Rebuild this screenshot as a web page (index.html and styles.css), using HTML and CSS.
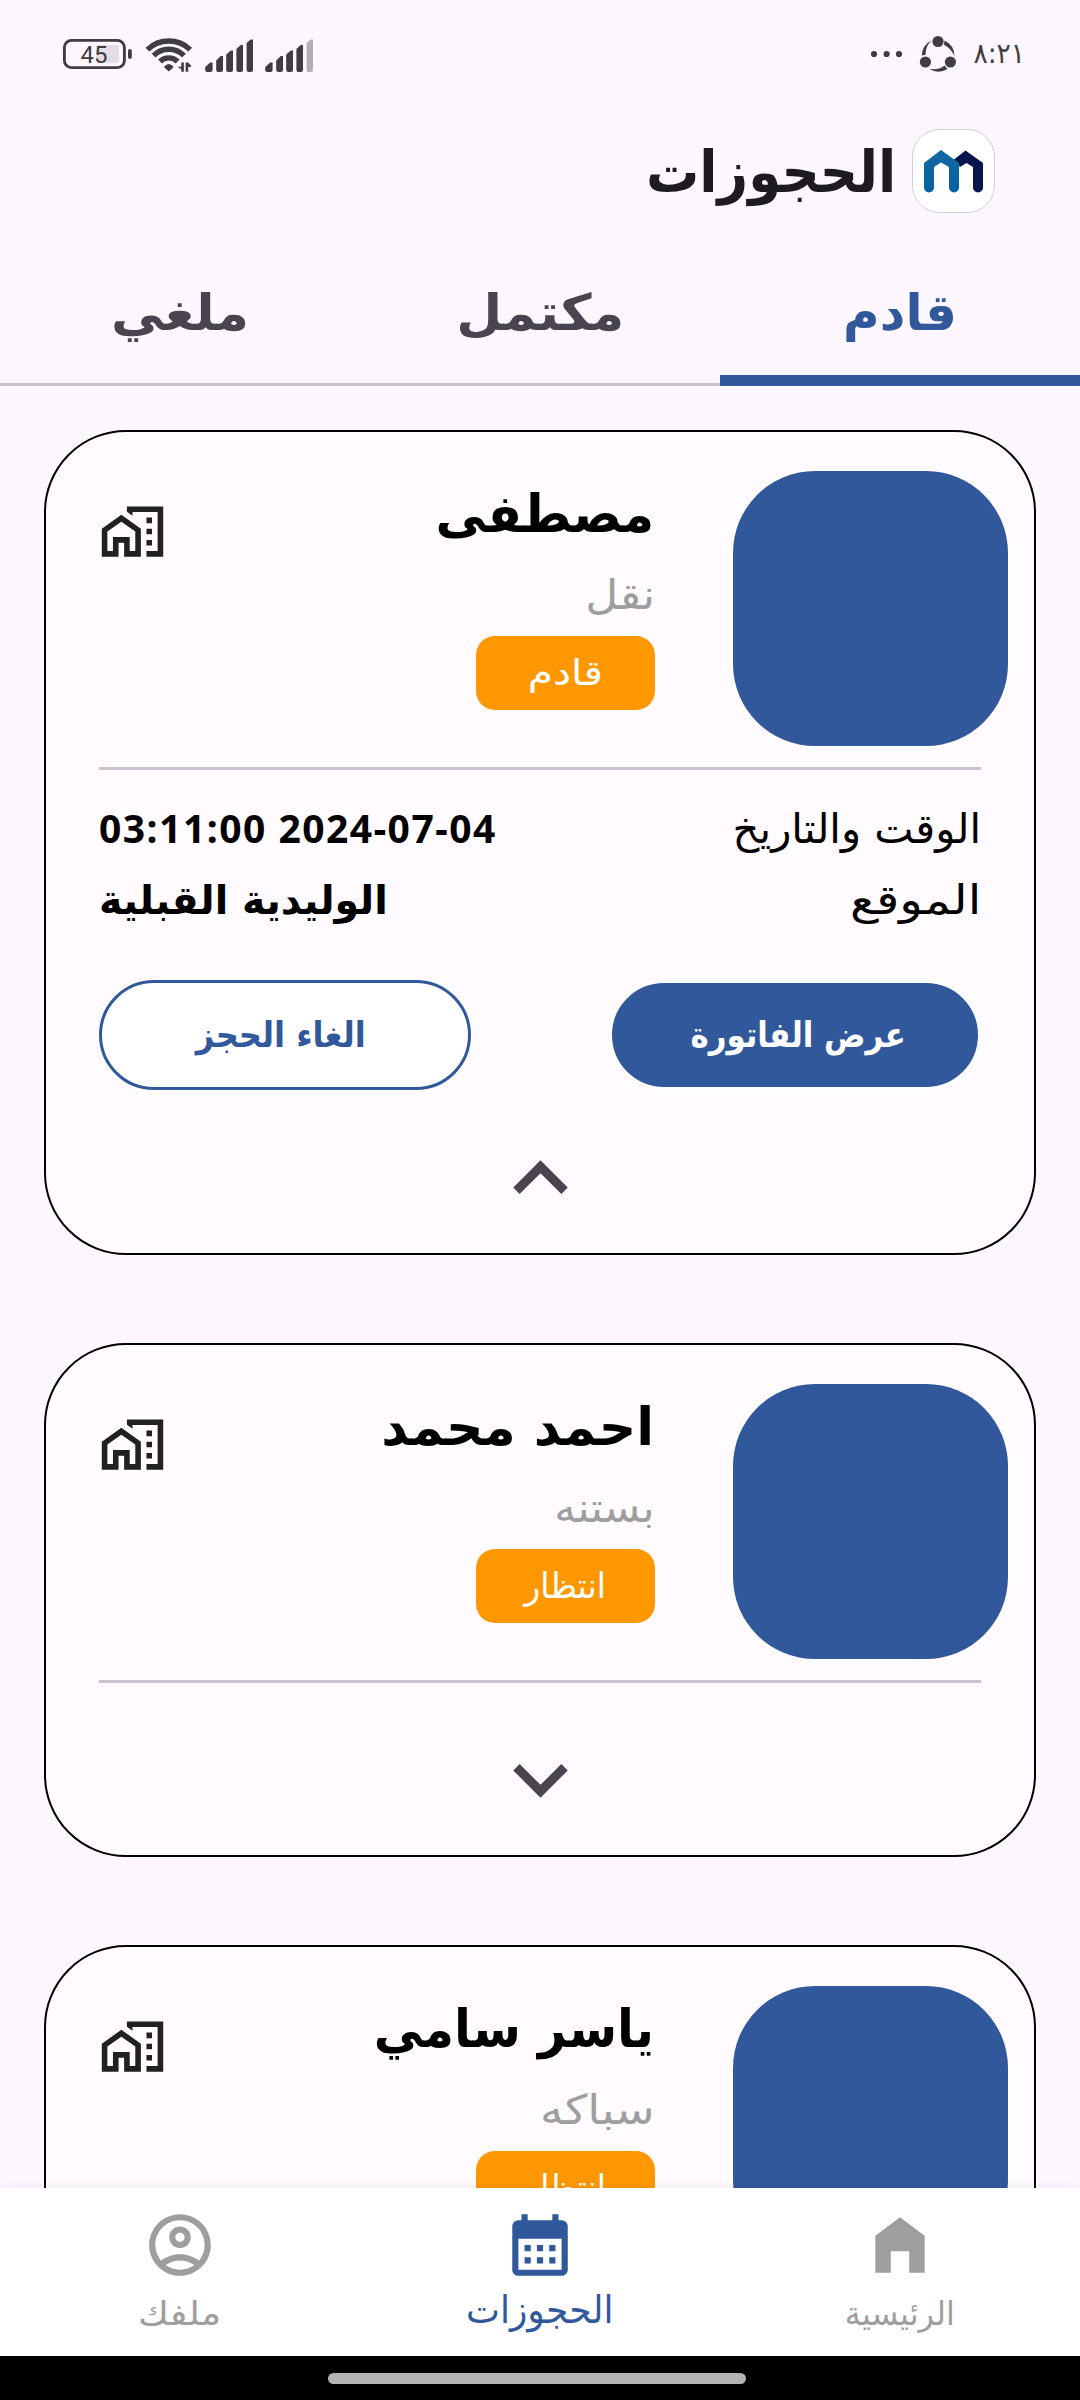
FILE: index.html
```html
<!DOCTYPE html>
<html lang="ar" dir="rtl">
<head>
<meta charset="utf-8">
<title>الحجوزات</title>
<link rel="stylesheet" href="styles.css">
</head>
<body>
<svg width="0" height="0" class="defs" aria-hidden="true">
  <symbol id="home-work" viewBox="0 0 24 24">
    <path fill-rule="evenodd" d="M1 11v10h6v-5h2v5h6V11L8 6l-7 5zm12 8h-2v-5H5v5H3v-7l5-3.5 5 3.5v7z"/>
    <path d="M17 7h2v2h-2zM17 11h2v2h-2zM17 15h2v2h-2z"/>
    <path d="M10 3v1.97l2 1.43V5h9v14h-4v2h6V3z"/>
  </symbol>
  <symbol id="chevron-up" viewBox="0 0 24 24"><path d="M12 8l-6 6 1.41 1.41L12 10.83l4.59 4.58L18 14z"/></symbol>
  <symbol id="chevron-down" viewBox="0 0 24 24"><path d="M16.59 8.59L12 13.17 7.41 8.59 6 10l6 6 6-6z"/></symbol>
</svg>

<header class="status" dir="ltr">
  <svg class="status-icons" width="260" height="50" viewBox="60 30 260 50">
    <rect x="96" y="45" width="23" height="18" rx="2" fill="#e3dee6"/>
    <rect x="64.4" y="40.4" width="60" height="27.2" rx="7" fill="none" stroke="#403d42" stroke-width="2.9"/>
    <rect x="128" y="49" width="3.8" height="10" rx="1.9" fill="#403d42"/>
    <text x="94" y="62.6" text-anchor="middle" class="battery-level">45</text>
    <g fill="none" stroke="#403d42" stroke-width="5.4">
      <path d="M147.4 49.6a31 31 0 0 1 42.8 0"/>
      <path d="M153.6 55.6a21.5 21.5 0 0 1 30.4 0"/>
      <path d="M160 61.5a12.5 12.5 0 0 1 17.6 0"/>
    </g>
    <g fill="#403d42">
      <path d="M164.2 66.5q4.6-5 9.2 0l-.6 1.6-4 3.4-4-3.4z"/>
      <path d="M181.3 62.5h2.6v9.3h-2.6v-2.6l-4-2.4h4zM185.6 62.5h2.6l3 3.4v1.2h-3v4.7h-2.6z"/>
      <path d="M205.2 70V67l5-4.600h2.400V70q0 2-2 2h-3.400q-2 0-2-2zM216.200 70V60.500l4.600-4.500h2.200V70q0 2-2 2h-2.800q-2 0-2-2zM226.200 70V54.500l4.600-4h2.200V70q0 2-2 2h-2.800q-2 0-2-2zM236.400 70V49l4.400-4h2.200V70q0 2-2 2h-2.600q-2 0-2-2zM246.600 70V43l4-3.500h2.400V70q0 2-2 2h-2.400q-2 0-2-2z"/>
      <path d="M265.2 70V67l5-4.600h2.400V70q0 2-2 2h-3.400q-2 0-2-2zM276.200 70V60.500l4.600-4.500h2.200V70q0 2-2 2h-2.800q-2 0-2-2zM286.200 70V54.500l4.600-4h2.200V70q0 2-2 2h-2.800q-2 0-2-2zM296.400 70V49l4.400-4h2.200V70q0 2-2 2h-2.600q-2 0-2-2z"/>
      <path fill="#b3aeb5" d="M306.600 70V43l4-3.500h2.400V70q0 2-2 2h-2.400q-2 0-2-2z"/>
    </g>
  </svg>
  <div class="status-end">
    <svg width="91" height="50" viewBox="865 30 91 50" fill="#403d42">
      <circle cx="874" cy="54" r="3.1"/><circle cx="886.6" cy="54" r="3.1"/><circle cx="899" cy="54" r="3.1"/>
      <circle cx="938" cy="41.500" r="5.600"/><circle cx="925.400" cy="62" r="5.600"/><circle cx="950.400" cy="62" r="5.600"/>
      <path d="M931.500 40.500A17.500 17.500 0 0 0 921.800 55.500l3.800-.7A19 19 0 0 1 931.500 40.500zM944.500 40.500A17.500 17.500 0 0 1 954.500 56A24 24 0 0 0 944 44.800zM929 68.800A17.500 17.500 0 0 0 947.500 69l-3-3.600Q939 70.500 929 68.800z"/>
    </svg>
    <span class="clock"><span class="fit fit-95">٨:٢١</span></span>
  </div>
</header>

<div class="topbar">
  <svg class="logo" width="84" height="84" viewBox="0 0 84 84">
    <defs><linearGradient id="blue" x1="0" y1="0" x2="0" y2="1"><stop offset="0" stop-color="#1268a4"/><stop offset="1" stop-color="#0462a2"/></linearGradient></defs>
    <rect x=".5" y=".5" width="82" height="83" rx="27" fill="#fff" stroke="#cdcfe0"/>
    <path fill="#06154c" d="M42 30.500L53.500 21.500 71 34V58.500a5 5 0 0 1-10 0V38l-6.500-4-6.500 4z"/>
    <path fill="url(#blue)" d="M12 34L29 21 47 34V58.500a5 5 0 0 1-10 0V38l-8-4.500L22 38V58.500a5 5 0 0 1-10 0z"/>
  </svg>
  <h1 class="title"><span class="fit fit-92">الحجوزات</span></h1>
</div>

<nav class="tabs">
  <a class="tab active"><span>قادم</span></a>
  <a class="tab"><span class="fit fit-106">مكتمل</span></a>
  <a class="tab"><span class="fit fit-106">ملغي</span></a>
</nav>

<main class="list">
  <article class="card">
    <div class="summary">
      <div class="photo"></div>
      <div class="who">
        <h2 class="name"><span class="fit fit-98">مصطفى</span></h2>
        <p class="service"><span class="fit fit-110">نقل</span></p>
        <span class="badge"><span class="fit fit-116">قادم</span></span>
      </div>
      <svg class="place"><use href="#home-work"/></svg>
    </div>
    <dl class="details">
      <div class="row"><dt><span class="fit fit-102">الوقت والتاريخ</span></dt><dd class="when" dir="ltr">03:11:00 2024-07-04</dd></div>
      <div class="row"><dt><span class="fit fit-118">الموقع</span></dt><dd><span class="fit fit-99">الوليدية القبلية</span></dd></div>
    </dl>
    <div class="actions">
      <button class="btn primary"><span class="fit fit-88">عرض الفاتورة</span></button>
      <button class="btn outline"><span class="fit fit-92">الغاء الحجز</span></button>
    </div>
    <svg class="toggle open"><use href="#chevron-up"/></svg>
  </article>

  <article class="card">
    <div class="summary">
      <div class="photo"></div>
      <div class="who">
        <h2 class="name"><span>احمد محمد</span></h2>
        <p class="service"><span class="fit fit-106">بستنه</span></p>
        <span class="badge"><span class="fit fit-95">انتظار</span></span>
      </div>
      <svg class="place"><use href="#home-work"/></svg>
    </div>
    <svg class="toggle"><use href="#chevron-down"/></svg>
  </article>

  <article class="card">
    <div class="summary">
      <div class="photo"></div>
      <div class="who">
        <h2 class="name"><span class="fit fit-95">ياسر سامي</span></h2>
        <p class="service"><span class="fit fit-114">سباكه</span></p>
        <span class="badge"><span class="fit fit-95">انتظار</span></span>
      </div>
      <svg class="place"><use href="#home-work"/></svg>
    </div>
    <svg class="toggle"><use href="#chevron-down"/></svg>
  </article>
</main>

<nav class="bottom">
  <a class="item">
    <svg viewBox="0 0 24 24"><path d="M4 9l8-6 8 6v12h-5v-7H9v7H4z"/></svg>
    <span class="fit fit-97">الرئيسية</span>
  </a>
  <a class="item active">
    <svg viewBox="0 0 24 24"><path fill-rule="evenodd" d="M19 4h-1V2h-2v2H8V2H6v2H5c-1.110 0-1.990.9-1.990 2L3 20c0 1.100.890 2 2 2h14c1.100 0 2-.9 2-2V6c0-1.100-.9-2-2-2zm0 16H5V10h14v10zM7 12h2v2H7zM11 12h2v2h-2zM15 12h2v2h-2zM7 16h2v2H7zM11 16h2v2h-2zM15 16h2v2h-2z"/></svg>
    <span class="fit fit-95">الحجوزات</span>
  </a>
  <a class="item">
    <svg viewBox="0 0 24 24"><path d="M12 2C6.480 2 2 6.480 2 12s4.480 10 10 10 10-4.480 10-10S17.520 2 12 2zM7.350 18.500C8.660 17.560 10.260 17 12 17s3.340.560 4.650 1.500c-1.310.940-2.910 1.500-4.650 1.500s-3.340-.560-4.650-1.500zm10.790-1.380C16.450 15.800 14.320 15 12 15s-4.450.800-6.140 2.120C4.700 15.730 4 13.950 4 12c0-4.420 3.580-8 8-8s8 3.580 8 8c0 1.950-.700 3.730-1.860 5.120zM12 6c-1.930 0-3.500 1.570-3.500 3.500S10.070 13 12 13s3.500-1.570 3.500-3.500S13.930 6 12 6zm0 5c-.830 0-1.500-.670-1.500-1.500S11.170 8 12 8s1.500.670 1.500 1.500S12.830 11 12 11z"/></svg>
    <span class="fit fit-114">ملفك</span>
  </a>
</nav>
<div class="gesture"><div class="handle"></div></div>
</body>
</html>
```
FILE: styles.css
```css
* { box-sizing: border-box; margin: 0; padding: 0; }

body {
  width: 1080px;
  height: 2400px;
  overflow: hidden;
  display: flex;
  flex-direction: column;
  background: #fef7ff;
  color: #000;
  font-family: "DejaVu Sans", "Noto Sans", sans-serif;
  white-space: nowrap;
}

.defs { display: none; }

/* Horizontal fitting of the labels */
.fit { display: inline-block; transform: scaleX(var(--fit)); }
.fit-88 { --fit: .882; }
.fit-92 { --fit: .916; }
.fit-95 { --fit: .947; }
.fit-97 { --fit: .968; }
.fit-98 { --fit: .975; }
.fit-99 { --fit: .988; }
.fit-102 { --fit: 1.018; }
.fit-106 { --fit: 1.06; }
.fit-110 { --fit: 1.107; }
.fit-114 { --fit: 1.14; }
.fit-116 { --fit: 1.165; }
.fit-118 { --fit: 1.19; }

/* Status bar */
.status {
  height: 129px;
  padding: 30px 57px 0 60px;
  display: flex;
  justify-content: space-between;
  align-items: flex-start;
}
.status-end { display: flex; align-items: flex-start; gap: 16px; }
.battery-level { font: 24px Roboto, sans-serif; fill: #403d42; }
.clock { font-size: 28px; line-height: 47px; color: #403d42; width: 51px; }

/* Title bar */
.topbar {
  height: 138px;
  padding-right: 84px;
  display: flex;
  align-items: flex-start;
  gap: 16px;
}
.title { font-size: 58px; line-height: 87px; color: #1d1b20; }
.title .fit, .who .fit, dt .fit { transform-origin: right; }
dd .fit { transform-origin: left; }

/* Tabs */
.tabs {
  height: 119px;
  display: grid;
  grid-template-columns: repeat(3, 1fr);
}
.tab {
  padding-top: 8px;
  border-bottom: 3px solid #cac4d0;
  font-size: 50px;
  font-weight: 700;
  line-height: 76px;
  text-align: center;
  color: #49454f;
}
.tab.active { border-bottom: 11px solid #31589b; color: #31589b; }

/* Booking cards */
.list {
  flex: 1;
  min-height: 0;
  overflow: hidden;
  padding: 44px 44px 0;
  display: flex;
  flex-direction: column;
  gap: 88px;
}
.card {
  flex: none;
  border: 2px solid #000;
  border-radius: 82px;
  background: #fffbff;
  padding: 39px 53px 21px;
  display: flex;
  flex-direction: column;
}
.summary {
  height: 299px;
  border-bottom: 3px solid #cac4d0;
  display: flex;
  align-items: flex-start;
}
.photo {
  width: 275px;
  height: 275px;
  margin-right: -27px;
  border-radius: 82px;
  background: #31589b;
}
.who {
  flex: 1;
  margin-right: 78px;
  display: flex;
  flex-direction: column;
  align-items: flex-start;
}
.name { font-size: 52px; line-height: 86px; padding-right: 1px; }
.service { font-size: 41px; line-height: 76px; color: #9e9e9e; }
.badge {
  width: 179px;
  height: 74px;
  margin-top: 3px;
  border-radius: 19px;
  background: #ff9800;
  color: #fff;
  font-size: 35px;
  line-height: 74px;
  text-align: center;
}
.badge .fit { transform-origin: center; }
.place { width: 67px; height: 67px; margin: 27px 0 0; fill: #212121; }

.details { padding-top: 24px; }
.row { display: flex; justify-content: space-between; line-height: 71px; }
dt { font-size: 41px; }
dd { font-size: 40px; font-weight: 700; }
.when { font: 700 39px/68px "Noto Sans", sans-serif; letter-spacing: 1.5px; }

.actions { display: flex; justify-content: space-between; padding-top: 44px; }
.btn {
  width: 372px;
  height: 110px;
  border-radius: 55px;
  border: 3px solid #31589b;
  font: 700 35px "DejaVu Sans", sans-serif;
}
.primary { border-color: #fff; background: #31589b; color: #fff; padding-left: 6px; }
.outline { background: #fff; color: #31589b; padding-right: 8px; }

.toggle { width: 109px; height: 109px; margin: 42px auto 0; fill: #49454f; }
.toggle.open { margin: 34px auto -1px; }

/* Bottom navigation */
.bottom {
  position: relative;
  height: 168px;
  background: #fff;
  box-shadow: 0 -1px 10px rgba(0, 0, 0, .07);
  display: grid;
  grid-template-columns: repeat(3, 1fr);
}
.item {
  padding-top: 20px;
  display: flex;
  flex-direction: column;
  align-items: center;
  color: #9e9e9e;
  font-size: 33px;
  line-height: 63px;
}
.item svg { width: 74px; height: 74px; fill: currentColor; }
.item.active { color: #31589b; font-size: 38px; line-height: 56px; }

.gesture {
  height: 44px;
  background: #000;
  display: flex;
  justify-content: center;
  padding: 17px 0 0 6px;
}
.gesture { direction: ltr; padding: 17px 6px 0 0; }
.handle { width: 418px; height: 11px; border-radius: 6px; background: #b3b3b3; }
```
